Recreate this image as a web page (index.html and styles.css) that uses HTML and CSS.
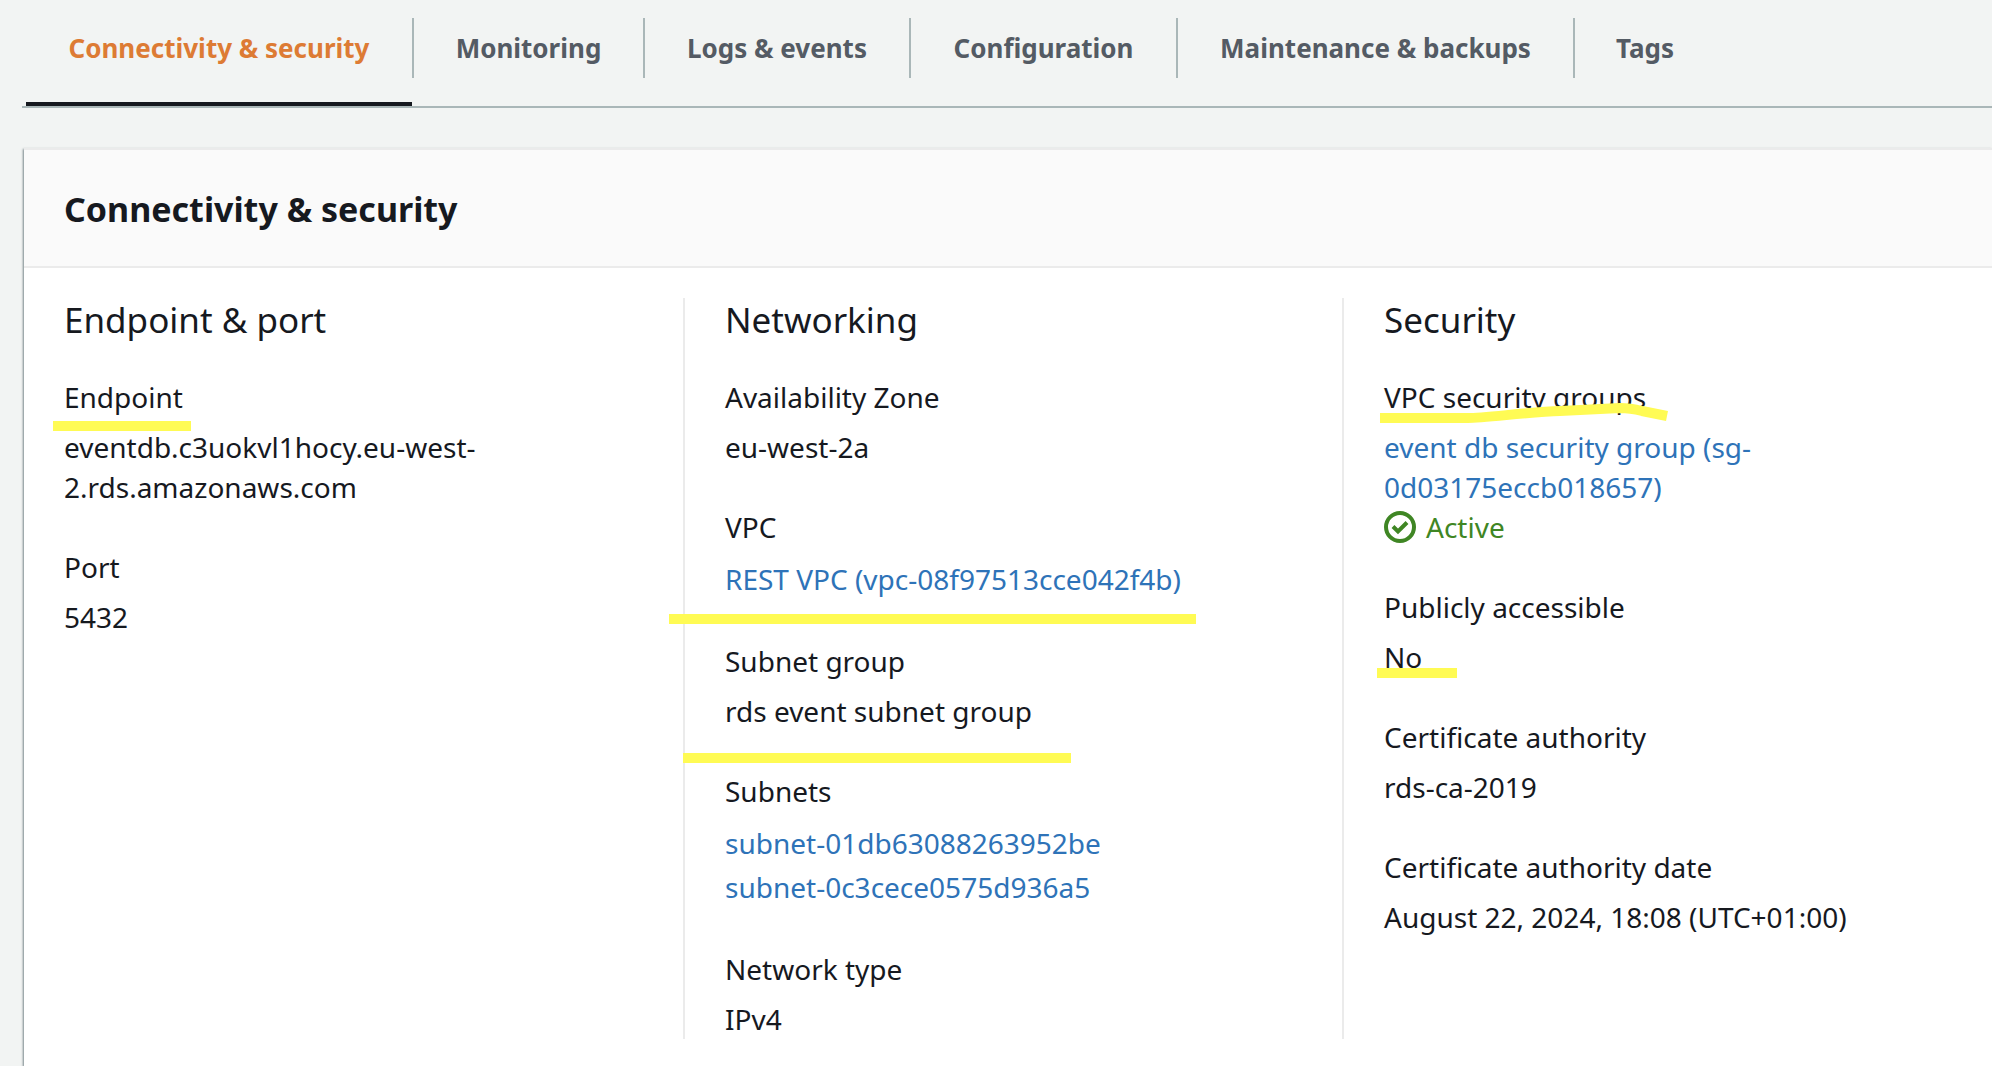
FILE: index.html
```html
<!DOCTYPE html>
<html lang="en">
<head>
<meta charset="utf-8">
<meta name="viewport" content="width=device-width, initial-scale=1">
<title>Connectivity &amp; security</title>
<link rel="stylesheet" href="styles.css">
</head>
<body>
<nav class="tabs" aria-label="Database details">
  <ul class="tab-list">
    <li class="tab"><a class="tab-link tab-link-active" href="#connectivity" aria-current="page">Connectivity &amp; security</a></li>
    <li class="tab"><a class="tab-link" href="#monitoring">Monitoring</a></li>
    <li class="tab"><a class="tab-link" href="#logs">Logs &amp; events</a></li>
    <li class="tab"><a class="tab-link" href="#configuration">Configuration</a></li>
    <li class="tab"><a class="tab-link" href="#maintenance">Maintenance &amp; backups</a></li>
    <li class="tab"><a class="tab-link" href="#tags">Tags</a></li>
  </ul>
</nav>
<main class="panel" id="connectivity">
  <header class="panel-header">
    <h1 class="panel-title">Connectivity &amp; security</h1>
  </header>
  <div class="columns">
    <section class="column">
      <h2 class="column-title">Endpoint &amp; port</h2>
      <dl class="fields">
        <div class="field">
          <dt>Endpoint</dt>
          <dd>eventdb.c3uokvl1hocy.eu-west-2.rds.amazonaws.com</dd>
          <span class="mark mark-endpoint"></span>
        </div>
        <div class="field">
          <dt>Port</dt>
          <dd>5432</dd>
        </div>
      </dl>
    </section>
    <section class="column">
      <h2 class="column-title">Networking</h2>
      <dl class="fields">
        <div class="field">
          <dt>Availability Zone</dt>
          <dd>eu-west-2a</dd>
        </div>
        <div class="field">
          <dt>VPC</dt>
          <dd class="link-list"><a href="#vpc">REST VPC (vpc-08f97513cce042f4b)</a></dd>
          <span class="mark mark-vpc"></span>
        </div>
        <div class="field">
          <dt>Subnet group</dt>
          <dd>rds event subnet group</dd>
          <span class="mark mark-subnet"></span>
        </div>
        <div class="field">
          <dt>Subnets</dt>
          <dd class="link-list">
            <a href="#subnet-1">subnet-01db63088263952be</a>
            <a href="#subnet-2">subnet-0c3cece0575d936a5</a>
          </dd>
        </div>
        <div class="field">
          <dt>Network type</dt>
          <dd>IPv4</dd>
        </div>
      </dl>
    </section>
    <section class="column">
      <h2 class="column-title">Security</h2>
      <dl class="fields">
        <div class="field">
          <dt>VPC security groups</dt>
          <dd>
            <a href="#security-group">event db security group (sg-0d03175eccb018657)</a>
            <div class="status">
              <svg class="status-icon" viewBox="0 0 32 32" aria-hidden="true">
                <circle cx="16" cy="16" r="14"/>
                <path d="M9 15.500l5 5 9-9"/>
              </svg>
              Active
            </div>
          </dd>
          <svg class="mark-groups" viewBox="0 0 290 24" aria-hidden="true">
            <path d="M0 15H88C104 15 150 9 180 8L240 5C248 5 254 6 262 8L287 13"/>
          </svg>
        </div>
        <div class="field">
          <dt>Publicly accessible</dt>
          <dd>No</dd>
          <span class="mark mark-public"></span>
        </div>
        <div class="field">
          <dt>Certificate authority</dt>
          <dd>rds-ca-2019</dd>
        </div>
        <div class="field">
          <dt>Certificate authority date</dt>
          <dd>August 22, 2024, 18:08 (UTC+01:00)</dd>
        </div>
      </dl>
    </section>
  </div>
</main>
</body>
</html>
```
FILE: styles.css
```css
* {
  box-sizing: border-box;
}

body {
  margin: 0;
  min-height: 100vh;
  display: flex;
  flex-direction: column;
  background: #f2f4f3;
  color: #16191f;
  font: 28px/40px "Noto Sans", "Open Sans", sans-serif;
}

a {
  color: #2e73b8;
  text-decoration: none;
}

.tabs {
  margin-left: 22px;
  padding: 18px 0 0 4px;
  border-bottom: 2px solid #aab7b8;
}

.tab-list {
  display: grid;
  grid-template-columns: 386px 231px 266px 267px 397px auto;
  margin: 0;
  padding: 0;
  list-style: none;
}

.tab {
  display: flex;
  align-items: flex-start;
}

.tab + .tab::before {
  content: "";
  width: 2px;
  height: 60px;
  background: #aab7b8;
}

.tab-link {
  flex: 1;
  padding-bottom: 24px;
  border-bottom: 4px solid transparent;
  color: #545b64;
  font-size: 26px;
  font-weight: 700;
  line-height: 60px;
  text-align: center;
  white-space: nowrap;
}

.tab:last-child .tab-link {
  padding-left: 41px;
  text-align: left;
}

.tab-link-active {
  border-color: #16191f;
  color: #dd7b34;
}

.panel {
  flex: 1;
  margin: 40px 0 0 24px;
  border-top: 2px solid #ebebeb;
  background: #fff;
  box-shadow: -1px 1px 2px rgba(0, 28, 36, 0.5);
}

.panel-header {
  padding: 37px 40px 35px;
  border-bottom: 2px solid #ebebeb;
  background: #fafafa;
}

.panel-title {
  margin: 0;
  font-size: 34px;
  font-weight: 700;
  line-height: 44px;
}

.columns {
  display: grid;
  grid-template-columns: 659fr 659fr 650fr;
  padding: 30px 0 26px;
}

.column {
  min-width: 0;
  padding: 0 40px;
}

.column + .column {
  border-left: 2px solid #ebebeb;
}

.column-title {
  margin: 0 0 35px;
  font-size: 35px;
  font-weight: 400;
  line-height: 44px;
}

.fields {
  display: flex;
  flex-direction: column;
  gap: 40px;
  margin: 0;
}

.field {
  position: relative;
}

dd {
  margin: 10px 0 0;
}

.link-list {
  display: flex;
  flex-direction: column;
  line-height: 44px;
}

.status {
  display: flex;
  align-items: center;
  gap: 10px;
  color: #3f8624;
}

.status-icon {
  width: 32px;
  height: 32px;
  fill: none;
  stroke: currentColor;
  stroke-width: 4;
}

/* Highlighter strokes drawn over the fields */
.mark {
  position: absolute;
  height: 10px;
  background: #fffb54;
}

.mark-endpoint {
  top: 44px;
  left: -11px;
  width: 138px;
}

.mark-vpc {
  top: 107px;
  left: -56px;
  width: 527px;
}

.mark-subnet {
  top: 112px;
  left: -42px;
  width: 388px;
}

.mark-public {
  top: 81px;
  left: -7px;
  width: 80px;
}

.mark-groups {
  position: absolute;
  top: 26px;
  left: -4px;
  width: 290px;
  height: 24px;
  fill: none;
  stroke: #fffb54;
  stroke-width: 10;
}
```
